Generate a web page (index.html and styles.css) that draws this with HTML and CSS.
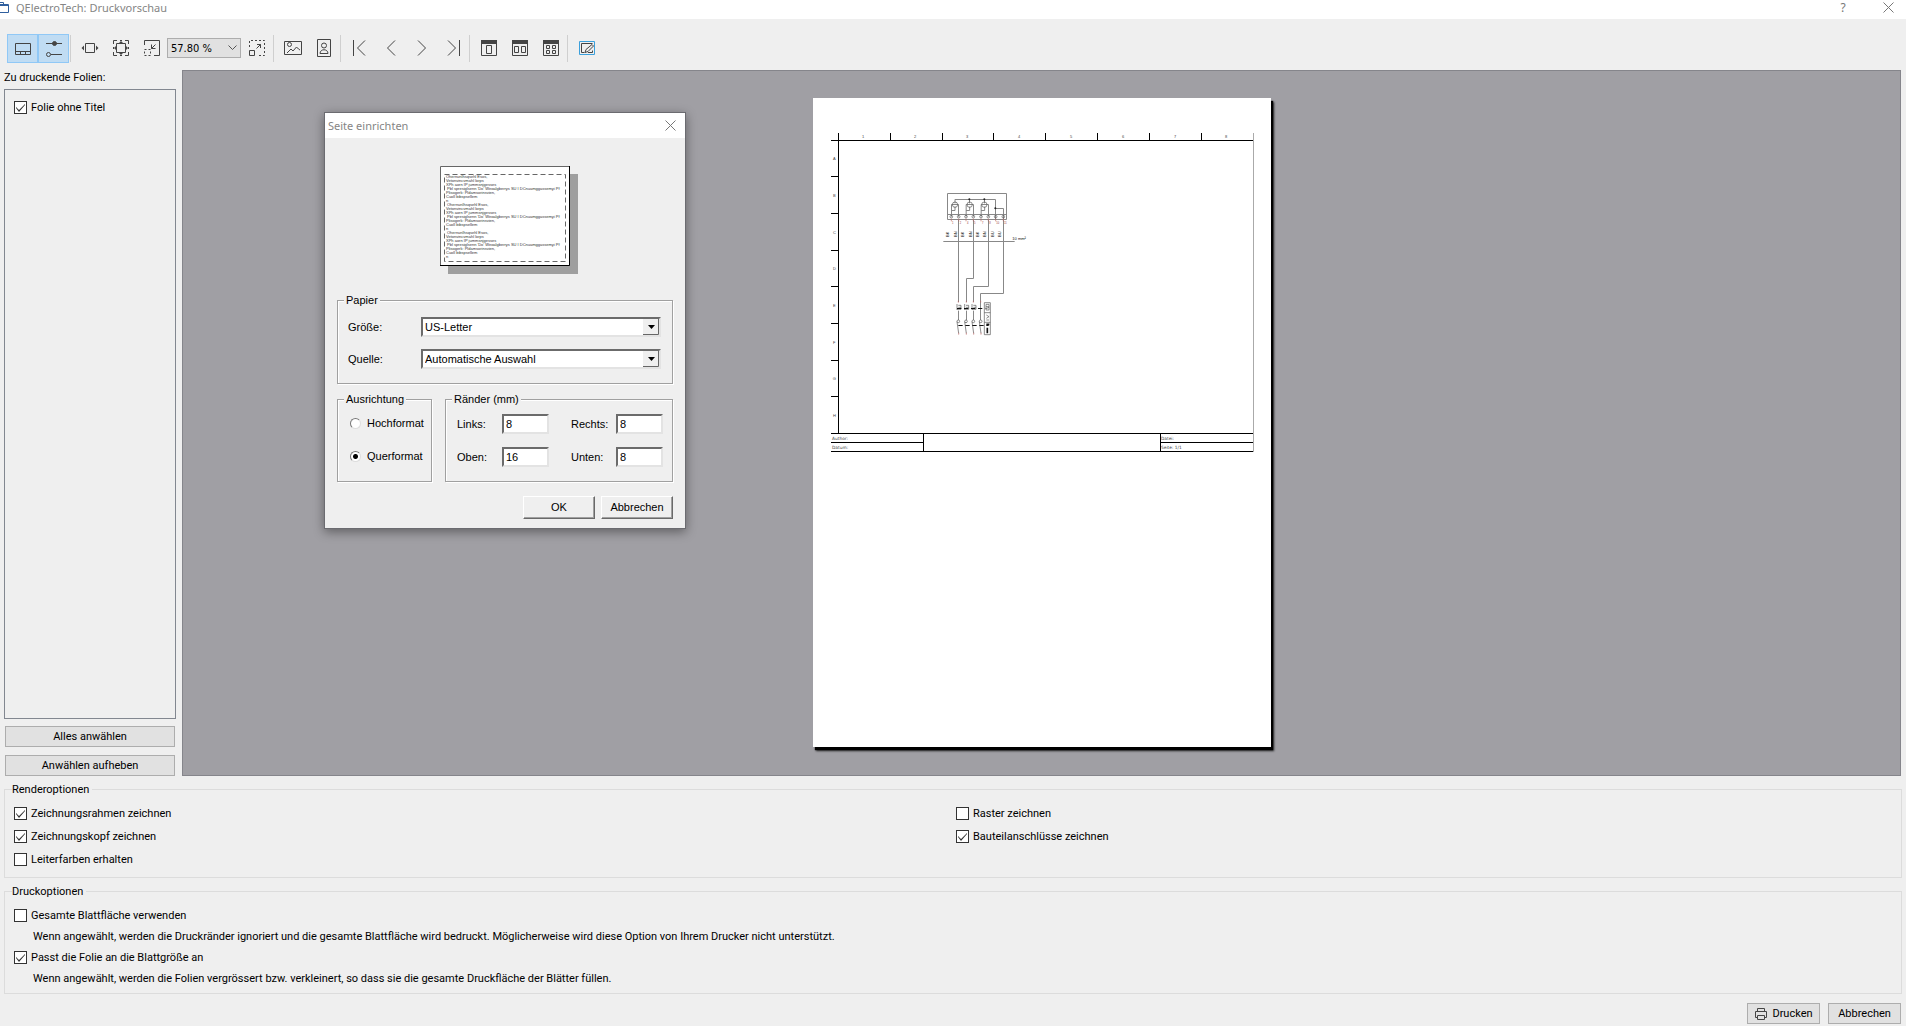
FILE: index.html
```html
<!DOCTYPE html>
<html lang="de">
<head>
<meta charset="utf-8">
<title>QElectroTech: Druckvorschau</title>
<link rel="stylesheet" href="styles.css">
</head>
<body>
<header class="titlebar">
  <svg class="app-icon" viewBox="0 0 9 14" width="9" height="14" fill="none" stroke="#2f5f9e"><path d="M0 12.500H8.500V4.500H0M0 5.500H8M0 2.500H3.500V4.500"/></svg>
  <h1 class="title">QElectroTech: Druckvorschau</h1>
  <button class="caption-button" aria-label="Hilfe">?</button>
  <button class="caption-button" aria-label="Schließen"><svg viewBox="0 0 11 11" width="11" height="11" stroke="#777" fill="none"><path d="M.5.5l10 10M10.500.5l-10 10"/></svg></button>
</header>

<div class="toolbar" role="toolbar">
  <button class="tool active" aria-label="Folienliste"><svg viewBox="0 0 22 22"><path d="M3.500 6.500h15v11h-15zM3.500 14.500h15M8.500 14.500v3M13.500 14.500v3"/></svg></button>
  <button class="tool active" aria-label="Optionen"><svg viewBox="0 0 22 22"><path d="M3 6.500h16M8 17.500h11"/><circle cx="11.500" cy="6.500" r="2" fill="#444"/><circle cx="5.500" cy="17.500" r="2"/></svg></button>
  <span class="separator"></span>
  <button class="tool" aria-label="Breite anpassen"><svg viewBox="0 0 22 22"><path d="M6.500 6.500h9v9h-9z"/><path d="M5 8.500L2.500 11l2.500 2.500zM17 8.500l2.500 2.500-2.500 2.500z" fill="#444" stroke="none"/></svg></button>
  <button class="tool" aria-label="Seite anpassen"><svg viewBox="0 0 22 22"><path d="M6.500 6.500h9v9h-9zM3.500 7V3.500H7M15 3.500h3.500V7M3.500 15v3.500H7M15 18.500h3.500V15M10 3.500h2M10 18.500h2M3.500 10v2M18.500 10v2"/><path d="M9 6l2-2 2 2zM9 16l2 2 2-2zM6 9l-2 2 2 2zM16 9l2 2-2 2z" fill="#444" stroke="none"/></svg></button>
  <button class="tool" aria-label="Verkleinern"><svg viewBox="0 0 22 22"><path d="M3.500 8V3.500h15v15H13M14.500 7.500l-4 4M10.500 7.500v4h4"/><path d="M3.500 12.500h6v6h-6z" stroke-dasharray="2 2"/></svg></button>
  <span class="select zoom">
    <select aria-label="Zoom"><option>57.80 %</option></select>
    <svg viewBox="0 0 9 6" width="9" height="6" fill="none" stroke="#555"><path d="M.5.5l4 4 4-4"/></svg>
  </span>
  <button class="tool" aria-label="Vergrößern"><svg viewBox="0 0 22 22"><path d="M3.500 10V3.500h15v15H11" stroke-dasharray="2 2"/><path d="M3.500 13.500h5v5h-5zM10.500 11.500l4-4M11 7.500h3.500V11"/></svg></button>
  <span class="separator"></span>
  <button class="tool" aria-label="Querformat"><svg viewBox="0 0 22 22"><path d="M2.500 4.500h17v13h-17zM5 16l4-4 2 2 3.500-4 2 2 1.500 1"/><circle cx="7.500" cy="7.500" r="2"/></svg></button>
  <button class="tool" aria-label="Hochformat"><svg viewBox="0 0 22 22"><path d="M4.500 2.500h13v17h-13zM7 16.500c0-5 8-5 8 0z"/><circle cx="11" cy="8.500" r="2.500"/></svg></button>
  <span class="separator"></span>
  <button class="tool" aria-label="Erste Seite"><svg viewBox="0 0 22 22"><path d="M4.500 3v16M16 3.500L8.500 11l7.500 7.500"/></svg></button>
  <button class="tool" aria-label="Vorherige Seite"><svg viewBox="0 0 22 22"><path d="M15 3.500L7.500 11l7.500 7.500"/></svg></button>
  <button class="tool" aria-label="Nächste Seite"><svg viewBox="0 0 22 22"><path d="M7 3.500l7.500 7.500L7 18.500"/></svg></button>
  <button class="tool" aria-label="Letzte Seite"><svg viewBox="0 0 22 22"><path d="M17.500 3v16M6 3.500l7.500 7.500L6 18.500"/></svg></button>
  <span class="separator"></span>
  <button class="tool" aria-label="Einzelne Seite"><svg viewBox="0 0 22 22"><path d="M3.500 3.500h15v15h-15zM8.500 8.500h5v8h-5z"/><path d="M3 3h16v4H3z" fill="#444" stroke="none"/></svg></button>
  <button class="tool" aria-label="Doppelseite"><svg viewBox="0 0 22 22"><path d="M3.500 3.500h15v15h-15zM5.500 9.500h4v6h-4zM12.500 9.500h4v6h-4z"/><path d="M3 3h16v4H3z" fill="#444" stroke="none"/></svg></button>
  <button class="tool" aria-label="Alle Seiten"><svg viewBox="0 0 22 22"><path d="M3.500 3.500h15v15h-15zM6.500 8.500h3v3h-3zM12.500 8.500h3v3h-3zM6.500 13.500h3v3h-3zM12.500 13.500h3v3h-3z"/><path d="M3 3h16v4H3z" fill="#444" stroke="none"/></svg></button>
  <span class="separator"></span>
  <button class="tool" aria-label="Seite einrichten"><svg viewBox="0 0 22 22"><path d="M3.500 4.500h15v13h-15z" stroke="#3ba0dc"/><path d="M5.500 15.500v-9h11M5.500 15.500h3M9 15.500l1-3 6-5 1.500 1.500-5.500 5.500zM12 15.500h4.500v-2"/></svg></button>
</div>

<main class="workspace">
  <aside class="sheets">
    <h2 class="sheets-title">Zu druckende Folien:</h2>
    <div class="sheet-list">
      <label class="check"><input type="checkbox" checked>Folie ohne Titel</label>
    </div>
    <button class="push">Alles anwählen</button>
    <button class="push">Anwählen aufheben</button>
  </aside>
  <section class="preview" aria-label="Vorschau">
    <svg class="paper" viewBox="21 24 1374 1947" width="458" height="649" fill="none" role="img" aria-label="Folie ohne Titel">
      <g stroke="#000" stroke-width="3">
        <path d="M75 151.500H1341M97.500 129V1030M75 1030.500H1341M75 1084.500H1341M75 1057.500H352M1063 1057.500H1341M352.500 1030V1084M1063.500 1030V1084"/>
        <path d="M253.500 129V150M409.500 129V150M562.500 129V150M718.500 129V150M874.500 129V150M1030.500 129V150M1186.500 129V150"/>
        <path d="M75 259.500H96M75 370.500H96M75 481.500H96M75 589.500H96M75 700.500H96M75 811.500H96M75 919.500H96"/>
        <path d="M1342.500 129V1086" stroke="#aaa"/>
      </g>
      <g class="marks" text-anchor="middle">
        <text x="171" y="143">1</text><text x="327" y="143">2</text><text x="483" y="143">3</text><text x="639" y="143">4</text><text x="795" y="143">5</text><text x="951" y="143">6</text><text x="1107" y="143">7</text><text x="1260" y="143">8</text>
        <text x="85" y="209">A</text><text x="85" y="320">B</text><text x="85" y="431">C</text><text x="85" y="539">D</text><text x="85" y="650">E</text><text x="85" y="761">F</text><text x="85" y="869">G</text><text x="85" y="980">H</text>
      </g>
      <g class="title-block">
        <text x="78" y="1050">Author:</text><text x="78" y="1077">Datum:</text><text x="1065" y="1050">Datei:</text><text x="1065" y="1077">Seite: 1/1</text>
      </g>
      <g stroke="#888" stroke-width="3">
        <path d="M424.500 310.500H601.500V388.500H424.500ZM424 373.500H601M412 454.500H626"/>
        <path d="M457.500 388V636M502.500 388V565.500H481.500V636M547.500 388V589.500H502.500V636M592.500 388V610.500H523.500V690"/>
        <path d="M457.500 662V690M481.500 662V690M502.500 662V690"/>
        <path d="M447 328.500H568.500V388M568.500 355.500H592.500V388M447 328V340M490.500 328V340M535.500 328V340"/>
        <path d="M436.500 380V343.500H457.500V380M436 361.500H447V350M480.500 380V343.500H502.500V380M480 361.500H491V350M525.500 380V343.500H547.500V380M525 361.500H536V350"/>
      </g>
      <g stroke="#555" stroke-width="2">
        <circle cx="447" cy="344" r="8"/><circle cx="491" cy="344" r="8"/><circle cx="535" cy="344" r="8"/>
        <circle cx="436" cy="380" r="4"/><circle cx="458" cy="380" r="4"/><circle cx="480" cy="380" r="4"/><circle cx="502" cy="380" r="4"/><circle cx="525" cy="380" r="4"/><circle cx="547" cy="380" r="4"/><circle cx="569" cy="380" r="4"/><circle cx="592" cy="380" r="4"/>
        <path d="M453 642v18M457 646h8v12h-12M457 652h8M476 642v18M480 646h8v12h-12M480 652h8M498 642v18M502 646h8v12h-12M502 652h8M453 695l5 35M476 695l5 35M498 695l5 35M520 695l5 35"/>
        <circle cx="457" cy="694" r="4"/><circle cx="480" cy="694" r="4"/><circle cx="502" cy="694" r="4"/><circle cx="524" cy="694" r="4"/>
        <path d="M535 638h18v96h-18zM535 668h18M535 697h18M540 643h9v17h-9zM540 650h9M540 656l9-4M541 675l8 5-8 5M541 690h8"/>
      </g>
      <g fill="#222"><circle cx="490" cy="328" r="3"/><circle cx="535" cy="328" r="3"/><circle cx="568" cy="355" r="3"/></g>
      <g stroke="#111" stroke-width="3"><path d="M453 655.500H538M457 706.500H548" stroke-dasharray="13 8"/><path d="M544 713V730M541 703H550" stroke-width="5"/></g>
      <g stroke="#b66" stroke-width="2"><path d="M436 386v8M458 386v8M480 386v8M502 386v8M525 386v8M547 386v8M569 386v8M592 386v8M457 632v6M481 632v6M502 632v6M524 632v6M458 728v6M481 728v6M503 728v6M525 728v6"/></g>
      <g class="terminals"><text x="438" y="401">1</text><text x="461" y="401">2</text><text x="483" y="401">4</text><text x="504" y="401">5</text><text x="528" y="401">7</text><text x="550" y="401">8</text><text x="571" y="401">10</text><text x="594" y="401">11</text></g>
      <g class="colours">
        <text transform="translate(430 441) rotate(-90)">BK</text><text transform="translate(454 441) rotate(-90)">BN</text><text transform="translate(475 441) rotate(-90)">BK</text><text transform="translate(499 441) rotate(-90)">BN</text><text transform="translate(520 441) rotate(-90)">BK</text><text transform="translate(541 441) rotate(-90)">BN</text><text transform="translate(565 441) rotate(-90)">BU</text><text transform="translate(586 441) rotate(-90)">BU</text>
        <text x="619" y="450">10 mm²</text>
      </g>
    </svg>
  </section>
</main>

<form class="options">
  <fieldset class="group">
    <legend>Renderoptionen</legend>
    <div class="columns">
      <div class="column">
        <label class="check"><input type="checkbox" checked>Zeichnungsrahmen zeichnen</label>
        <label class="check"><input type="checkbox" checked>Zeichnungskopf zeichnen</label>
        <label class="check"><input type="checkbox">Leiterfarben erhalten</label>
      </div>
      <div class="column">
        <label class="check"><input type="checkbox">Raster zeichnen</label>
        <label class="check"><input type="checkbox" checked>Bauteilanschlüsse zeichnen</label>
      </div>
    </div>
  </fieldset>
  <fieldset class="group">
    <legend>Druckoptionen</legend>
    <div class="stack">
      <label class="check"><input type="checkbox">Gesamte Blattfläche verwenden</label>
      <p class="hint">Wenn angewählt, werden die Druckränder ignoriert und die gesamte Blattfläche wird bedruckt. Möglicherweise wird diese Option von Ihrem Drucker nicht unterstützt.</p>
      <label class="check"><input type="checkbox" checked>Passt die Folie an die Blattgröße an</label>
      <p class="hint">Wenn angewählt, werden die Folien vergrössert bzw. verkleinert, so dass sie die gesamte Druckfläche der Blätter füllen.</p>
    </div>
  </fieldset>
</form>

<footer class="actions">
  <button class="push"><svg viewBox="0 0 14 14" width="14" height="14" fill="none" stroke="#444"><path d="M3.500 4.500v-3h7v3M3.500 10.500h-2v-6h11v6h-2M3.500 8.500h7v4h-7z"/></svg>Drucken</button>
  <button class="push">Abbrechen</button>
</footer>

<div class="dialog" role="dialog" aria-labelledby="dialog-title">
  <header class="dialog-bar">
    <h2 class="title" id="dialog-title">Seite einrichten</h2>
    <button class="caption-button" aria-label="Schließen"><svg viewBox="0 0 11 11" width="11" height="11" stroke="#777" fill="none"><path d="M.5.5l10 10M10.500.5l-10 10"/></svg></button>
  </header>
  <form class="dialog-body">
    <svg class="sample" viewBox="0 0 138 108" width="138" height="108" fill="none">
      <path d="M8 8h130v100H8z" fill="#9f9f9f"/>
      <path d="M.5.5h129v99H.5z" fill="#fff" stroke="#666"/>
      <path d="M0 99.500H129.500V0" stroke="#000"/>
      <path d="M4.500 8.500h121v87h-121z" stroke="#666" stroke-dasharray="5 3"/>
      <g class="greek">
        <text x="6" y="12">Ohernunlhsqsehl Esos,</text><text x="6" y="16">Vetonvincvmahl lorps</text><text x="6" y="20">XPh aorn IP jummsnjgesses</text><text x="7" y="24">Pbl spresiglsenn 'Do' Weoalgberrys SU I DCnuamggassemyi Pf</text><text x="6" y="28">Plisogerk: Pldamsorinsvien,</text><text x="6" y="32">Cuoll bibspsellem</text><text x="6" y="36">n</text>
        <text x="7" y="40">Ohernunlhsqsehl Esos,</text><text x="6" y="44">Vetonvincvmahl lorps</text><text x="6" y="48">XPh aorn IP jummsnjgesses</text><text x="7" y="52">Pbl spresiglsenn 'Do' Weoalgberrys SU I DCnuamggassemyi Pf</text><text x="6" y="56">Plisogerk: Pldamsorinsvien,</text><text x="6" y="60">Cuoll bibspsellem</text><text x="6" y="64">n</text>
        <text x="7" y="68">Ohernunlhsqsehl Esos,</text><text x="6" y="72">Vetonvincvmahl lorps</text><text x="6" y="76">XPh aorn IP jummsnjgesses</text><text x="7" y="80">Pbl spresiglsenn 'Do' Weoalgberrys SU I DCnuamggassemyi Pf</text><text x="6" y="84">Plisogerk: Pldamsorinsvien,</text><text x="6" y="88">Cuoll bibspsellem</text><text x="6" y="92">n</text>
      </g>
    </svg>
    <fieldset class="box">
      <legend>Papier</legend>
      <div class="paper-fields">
        <label for="size">Größe:</label>
        <span class="select classic"><select id="size"><option>US-Letter</option></select><svg viewBox="0 0 16 16" width="16" height="16"><path d="M0 0h16v16H0z" fill="#efefef"/><path d="M0 15.500H15.500V0" stroke="#666" fill="none"/><path d="M5 6h7l-3.500 4z" fill="#000"/></svg></span>
        <label for="source">Quelle:</label>
        <span class="select classic"><select id="source"><option>Automatische Auswahl</option></select><svg viewBox="0 0 16 16" width="16" height="16"><path d="M0 0h16v16H0z" fill="#efefef"/><path d="M0 15.500H15.500V0" stroke="#666" fill="none"/><path d="M5 6h7l-3.500 4z" fill="#000"/></svg></span>
      </div>
    </fieldset>
    <div class="box-row">
      <fieldset class="box">
        <legend>Ausrichtung</legend>
        <div class="radio-fields">
          <label class="radio"><input type="radio" name="orientation">Hochformat</label>
          <label class="radio"><input type="radio" name="orientation" checked>Querformat</label>
        </div>
      </fieldset>
      <fieldset class="box">
        <legend>Ränder (mm)</legend>
        <div class="margin-fields">
          <label for="left">Links:</label><input id="left" value="8">
          <label for="right">Rechts:</label><input id="right" value="8">
          <label for="top">Oben:</label><input id="top" value="16">
          <label for="bottom">Unten:</label><input id="bottom" value="8">
        </div>
      </fieldset>
    </div>
    <div class="dialog-actions">
      <button type="button" class="raised">OK</button>
      <button type="button" class="raised">Abbrechen</button>
    </div>
  </form>
</div>
</body>
</html>
```
FILE: styles.css
```css
* { box-sizing: border-box; }

body {
  margin: 0;
  min-height: 100vh;
  display: flex;
  flex-direction: column;
  background: #efefef;
  color: #000;
  font: 11px/15px Roboto, "Liberation Sans", sans-serif;
}

button, input, select { font: inherit; color: inherit; margin: 0; }
h1, h2, p { margin: 0; font-size: inherit; font-weight: normal; }
fieldset { margin: 0; padding: 0; border: 0; min-width: 0; }
svg { display: block; flex: none; }

/* Title bars */
.titlebar, .dialog-bar {
  display: flex;
  align-items: center;
  background: #fff;
}
.titlebar { height: 19px; padding: 0 7px 5px 0; gap: 7px; }
.title {
  flex: 1;
  color: #858585;
  font: 11px/15px "Noto Sans", "Open Sans", sans-serif;
}
.caption-button {
  display: grid;
  place-items: center;
  width: 22px;
  height: 15px;
  padding: 0;
  border: 0;
  background: none;
  color: #777;
  font: 12px/15px "Noto Sans", sans-serif;
}
.titlebar .caption-button { margin-left: 16px; }

/* Toolbar */
.toolbar {
  display: flex;
  align-items: center;
  height: 51px;
  padding: 7px 7px 0;
}
.toolbar .tool {
  display: grid;
  place-items: center;
  width: 31px;
  height: 29px;
  padding: 0;
  border: 1px solid transparent;
  background: none;
}
.tool svg { width: 22px; height: 22px; fill: none; stroke: #444; }
.toolbar .active { background: #c0dcf3; border-color: #90c8f6; }
.separator { width: 1px; height: 27px; margin: 0 3px 0 1px; background: #cfcfcf; }

.select { display: grid; align-items: center; }
.select > * { grid-area: 1 / 1; }
.select select { width: 100%; appearance: none; border-radius: 0; }
.select svg { justify-self: end; pointer-events: none; }
.zoom { width: 74px; }
.zoom select {
  height: 20px;
  padding: 0 3px;
  border: 1px solid #adadad;
  background: #e1e1e1;
  font: 11px/15px "DejaVu Sans Condensed", "DejaVu Sans", sans-serif;
}
.zoom svg { margin-right: 4px; }

/* Sheet list and preview */
.workspace { flex: 1; display: flex; gap: 6px; padding: 0 5px 0 4px; }
.sheets { display: flex; flex-direction: column; flex: 0 0 172px; }
.sheets-title { line-height: 15px; margin-bottom: 4px; }
.sheet-list {
  flex: 1;
  margin-bottom: 7px;
  padding: 10px 9px;
  border: 1px solid #828790;
}
.push {
  display: flex;
  align-items: center;
  justify-content: center;
  gap: 4px;
  height: 21px;
  padding: 0;
  border: 1px solid #adadad;
  background: #e1e1e1;
}
.sheets .push { margin: 0 1px; }
.sheets .push + .push { margin-top: 8px; }
.preview {
  flex: 1;
  display: flex;
  justify-content: center;
  align-items: flex-start;
  padding: 27px 0;
  border: 1px solid #85858b;
  background: #a09fa4;
}
.paper {
  background: #fff;
  box-shadow: 2px 3px 1px #000, 3px 4px 2px #222;
}
.marks { font: 12px "Liberation Sans", sans-serif; fill: #444; }
.title-block { font: 13px "DejaVu Sans", sans-serif; fill: #444; }
.terminals { font: 8px "Liberation Sans", sans-serif; fill: #933; }
.colours { font: 12px "Liberation Sans", sans-serif; fill: #111; }

/* Check boxes */
.check { display: flex; align-items: center; gap: 4px; height: 15px; }
.check input {
  appearance: none;
  width: 13px;
  height: 13px;
  border: 1px solid #333;
  background: #fff;
}
.check input:checked::before {
  content: "";
  display: block;
  height: 11px;
  background: #333;
  clip-path: polygon(1px 5px, 4px 8px, 10px 2px, 10px 3px, 4px 10px, 1px 6px);
}

/* Option groups */
.options { padding: 6px 4px 0; }
.group {
  border: 1px solid #dcdcdc;
  padding: 0 9px;
}
.group + .group { margin-top: 6px; }
.group legend { height: 15px; padding: 0 3px 0 0; margin-left: -2px; }
.columns { display: grid; grid-template-columns: 1fr 1fr; gap: 6px; padding: 9px 0 10px; }
.column { display: flex; flex-direction: column; gap: 8px; }
.stack { display: flex; flex-direction: column; gap: 6px; padding: 9px 0 7px; }
.hint { padding-left: 19px; }

.actions {
  display: flex;
  justify-content: flex-end;
  gap: 8px;
  padding: 9px 5px 2px;
}
.actions .push { width: 73px; }

/* Page setup dialog */
.dialog {
  position: absolute;
  left: 324px;
  top: 112px;
  width: 362px;
  border: 1px solid #6b6b70;
  background: #efefef;
  box-shadow: 0 3px 10px rgba(0, 0, 0, .4);
  font: 11px/15px "Liberation Sans", Arial, sans-serif;
}
.dialog-bar { height: 25px; padding: 0 4px 1px 3px; }
.dialog-body { padding: 28px 12px 9px; }
.sample { margin: 0 auto; position: relative; left: 4px; }
.greek { font: 4px "Liberation Sans", sans-serif; fill: #333; }
.box { border: 1px solid #a0a0a0; box-shadow: 1px 1px #fff, inset 1px 1px #fff; }
.box legend { height: 15px; margin-left: 6px; padding: 0 2px; background: #efefef; }
.dialog-body > .box { margin-top: 19px; }
.paper-fields {
  display: grid;
  grid-template-columns: 73px 1fr;
  gap: 12px 0;
  align-items: center;
  padding: 9px 11px 14px 10px;
}
.classic select, .margin-fields input {
  height: 20px;
  padding: 0 2px;
  border: 2px solid;
  border-color: #6b6b6b #e3e3e3 #e3e3e3 #6b6b6b;
  background: #fff;
}
.classic svg { margin-right: 2px; }
.box-row {
  display: grid;
  grid-template-columns: 95px 1fr;
  gap: 13px;
  margin-top: 8px;
}
.radio-fields { display: grid; gap: 18px; padding: 9px 12px; }
.radio { display: flex; align-items: center; gap: 6px; }
.radio input {
  appearance: none;
  width: 11px;
  height: 11px;
  border: 1px solid;
  border-color: #777 #ddd #ddd #777;
  border-radius: 50%;
  background: #fff;
}
.radio input:checked { background: radial-gradient(circle, #000 0 2px, #fff 3px); }
.margin-fields {
  display: grid;
  grid-template-columns: 45px 1fr 45px 47px;
  row-gap: 13px;
  align-items: center;
  padding: 7px 9px 14px 11px;
}
.margin-fields input { width: 47px; }
.dialog-actions {
  display: flex;
  justify-content: flex-end;
  gap: 6px;
  margin-top: 14px;
}
.raised {
  width: 72px;
  height: 23px;
  padding: 0;
  border: 1px solid;
  border-color: #fff #696969 #696969 #fff;
  background: #efefef;
  box-shadow: inset -1px -1px #a0a0a0;
}
```
